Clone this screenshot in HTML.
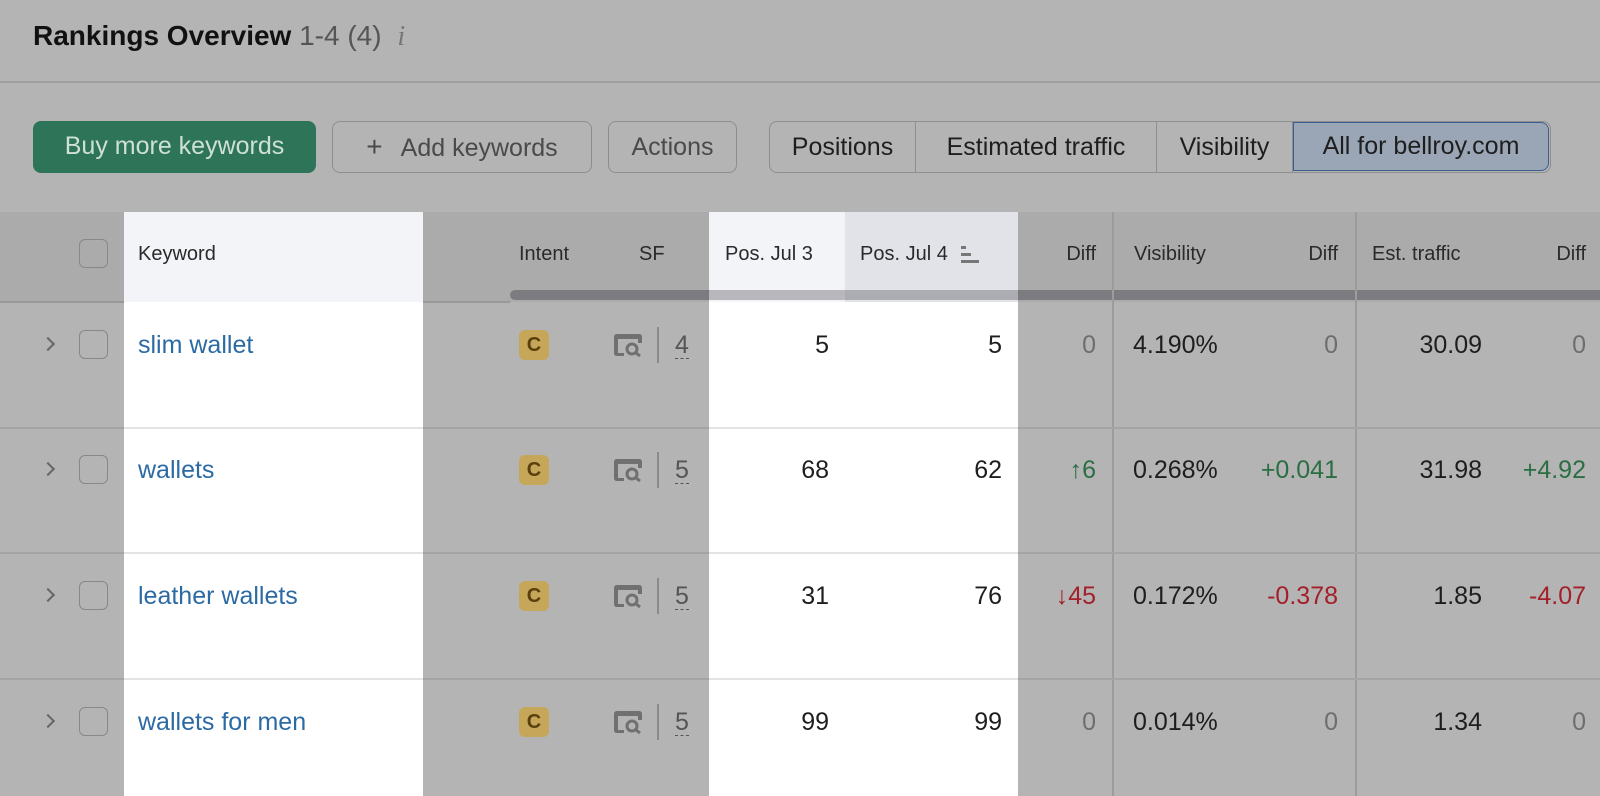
<!DOCTYPE html>
<html><head><meta charset="utf-8"><style>
*{margin:0;padding:0;box-sizing:border-box}
body{width:1600px;height:796px;background:#b4b4b4;font-family:"Liberation Sans",sans-serif;position:relative;overflow:hidden;color:#1e1e1e}
.a{position:absolute}
.btn{position:absolute;top:121px;height:52px;border-radius:8px;font-size:25px;line-height:50px;text-align:center}
.gbtn{border:1.5px solid #8e8e8e;color:#4a4a4a;background:#b4b4b4}
.seg{position:absolute;top:121px;height:52px;border:1.5px solid #8e8e8e;border-radius:8px;overflow:hidden;left:769px;width:782px}
.seg div{position:absolute;top:0;height:50px;line-height:50px;font-size:25px;color:#1e1e1e;text-align:center;border-right:1.5px solid #8e8e8e}
.hd{position:absolute;top:212px;height:90px;font-size:20px;line-height:84px;color:#2a2a2a}
.cell{position:absolute;font-size:25px}
.chk{position:absolute;left:79px;width:29px;height:29px;border:1.5px solid #888;border-radius:6px}
.chev{position:absolute;left:43px;width:10px;height:10px;border-right:2px solid #666;border-top:2px solid #666;transform:rotate(45deg)}
.badge{position:absolute;left:519px;width:30px;height:30px;background:#c6a659;border-radius:6px;color:#5a400c;font-weight:bold;font-size:20px;text-align:center;line-height:30px}
.num{position:absolute;font-size:25px;text-align:right;width:120px}
</style></head><body>
<div class="a" style="left:33px;top:20px;font-size:28px;font-weight:bold;color:#111">Rankings Overview <span style="font-weight:normal;color:#555">1-4 (4)</span> <span style="font-weight:normal;font-style:italic;color:#777;font-family:'Liberation Serif',serif;margin-left:8px">i</span></div>
<div class="a" style="left:0;top:81px;width:1600px;height:1.5px;background:#9e9e9e"></div>

<div class="btn" style="left:33px;width:283px;background:#2d7459;color:#cfe0d6">Buy more keywords</div>
<div class="btn gbtn" style="left:332px;width:260px"><span style="font-size:28px;margin-right:18px">+</span>Add keywords</div>
<div class="btn gbtn" style="left:608px;width:129px">Actions</div>
<div class="seg">
<div style="left:0;width:146px">Positions</div>
<div style="left:146px;width:241px">Estimated traffic</div>
<div style="left:387px;width:136px">Visibility</div>
<div style="left:523px;width:256px;background:#9aa6b6;border:1.5px solid #3a5f8f;border-radius:0 8px 8px 0;height:49px;line-height:47px">All for bellroy.com</div>
</div>

<div class="a" style="left:0;top:212px;width:1600px;height:90px;background:#ababab"></div>
<div class="a" style="left:124px;top:212px;width:299px;height:90px;background:#f3f4f7"></div>
<div class="a" style="left:709px;top:212px;width:136px;height:90px;background:#f3f4f7"></div>
<div class="a" style="left:845px;top:212px;width:173px;height:90px;background:#e2e3e9"></div>
<div class="a" style="left:510px;top:290px;width:1090px;height:10px;background:#7c7c80;border-radius:5px 0 0 5px"></div>
<div class="a" style="left:709px;top:290px;width:136px;height:10px;background:#b8b8bc"></div>
<div class="a" style="left:845px;top:290px;width:173px;height:10px;background:#acadb3"></div>
<div class="a" style="left:0;top:301px;width:124px;height:1.5px;background:#999"></div>
<div class="a" style="left:423px;top:301px;width:87px;height:1.5px;background:#999"></div>
<div class="chk" style="top:239px"></div>
<div class="hd" style="left:138px">Keyword</div>
<div class="hd" style="left:519px">Intent</div>
<div class="hd" style="left:639px">SF</div>
<div class="hd" style="left:725px">Pos. Jul 3</div>
<div class="hd" style="left:860px">Pos. Jul 4 <span style="display:inline-block;vertical-align:middle;width:22px;height:18px;position:relative;margin-left:6px"><i style="position:absolute;left:2px;top:0;width:5px;height:3px;background:#777"></i><i style="position:absolute;left:2px;top:7px;width:10px;height:3px;background:#777"></i><i style="position:absolute;left:2px;top:14px;width:18px;height:3px;background:#777"></i></span></div>
<div class="hd" style="left:976px;width:120px;text-align:right">Diff</div>
<div class="hd" style="left:1134px">Visibility</div>
<div class="hd" style="left:1218px;width:120px;text-align:right">Diff</div>
<div class="hd" style="left:1372px">Est. traffic</div>
<div class="hd" style="left:1466px;width:120px;text-align:right">Diff</div>

<div class="a" style="left:124px;top:302px;width:299px;height:494px;background:#fff"></div>
<div class="a" style="left:709px;top:302px;width:309px;height:494px;background:#fff"></div>
<div class="a" style="left:1112px;top:212px;width:1.5px;height:584px;background:#9c9c9c"></div>
<div class="a" style="left:1355px;top:212px;width:1.5px;height:584px;background:#9c9c9c"></div>
<div class="a" style="left:0;top:427px;width:1600px;height:1.5px;background:#a4a4a4"></div>
<div class="a" style="left:0;top:552px;width:1600px;height:1.5px;background:#a4a4a4"></div>
<div class="a" style="left:0;top:678px;width:1600px;height:1.5px;background:#a4a4a4"></div>
<div class="a" style="left:124px;top:427px;width:299px;height:1.5px;background:#e4e4e4"></div>
<div class="a" style="left:124px;top:552px;width:299px;height:1.5px;background:#e4e4e4"></div>
<div class="a" style="left:124px;top:678px;width:299px;height:1.5px;background:#e4e4e4"></div>
<div class="a" style="left:709px;top:427px;width:309px;height:1.5px;background:#e4e4e4"></div>
<div class="a" style="left:709px;top:552px;width:309px;height:1.5px;background:#e4e4e4"></div>
<div class="a" style="left:709px;top:678px;width:309px;height:1.5px;background:#e4e4e4"></div>

<div id="rows"></div>
<script>
var rows=[
["slim wallet",345,"4","5","5",["0","#6e6e6e"],"4.190%",["0","#6e6e6e"],"30.09",["0","#6e6e6e"]],
["wallets",470,"5","68","62",["↑6","#2b6e43"],"0.268%",["+0.041","#2b6e43"],"31.98",["+4.92","#2b6e43"]],
["leather wallets",596,"5","31","76",["↓45","#a3202a"],"0.172%",["-0.378","#a3202a"],"1.85",["-4.07","#a3202a"]],
["wallets for men",722,"5","99","99",["0","#6e6e6e"],"0.014%",["0","#6e6e6e"],"1.34",["0","#6e6e6e"]]];
var h="";
rows.forEach(function(r){var c=r[1],t=c-14;
h+='<div class="chev" style="top:'+(c-6)+'px"></div>';
h+='<div class="chk" style="top:'+(c-15)+'px"></div>';
h+='<div class="cell" style="left:138px;top:'+t+'px;color:#2c6aa3">'+r[0]+'</div>';
h+='<div class="badge" style="top:'+(c-15)+'px">C</div>';
h+='<svg class="a" style="left:612px;top:'+(c-12)+'px" width="32" height="24" viewBox="0 0 32 24"><path d="M2 4 Q2 1 5 1 H27 Q30 1 30 4 V10 H26 V6 H6 V20 H12 V23 H5 Q2 23 2 20 Z" fill="#707070"/><circle cx="20" cy="16" r="5" fill="none" stroke="#707070" stroke-width="3"/><path d="M23.5 19.5 L28 23" stroke="#707070" stroke-width="3"/></svg>';
h+='<div class="a" style="left:657px;top:'+(c-18)+'px;width:1.5px;height:36px;background:#8a8a8a"></div>';
h+='<div class="cell" style="left:675px;top:'+t+'px;color:#555">'+r[2]+'<div style="border-top:1.5px dashed #555;margin-top:-2px"></div></div>';
h+='<div class="num" style="left:709px;top:'+t+'px">'+r[3]+'</div>';
h+='<div class="num" style="left:882px;top:'+t+'px">'+r[4]+'</div>';
h+='<div class="num" style="left:976px;top:'+t+'px;color:'+r[5][1]+'">'+r[5][0]+'</div>';
h+='<div class="cell" style="left:1133px;top:'+t+'px">'+r[6]+'</div>';
h+='<div class="num" style="left:1218px;top:'+t+'px;color:'+r[7][1]+'">'+r[7][0]+'</div>';
h+='<div class="num" style="left:1362px;top:'+t+'px">'+r[8]+'</div>';
h+='<div class="num" style="left:1466px;top:'+t+'px;color:'+r[9][1]+'">'+r[9][0]+'</div>';
});
document.getElementById("rows").innerHTML=h;
</script>
</body></html>
